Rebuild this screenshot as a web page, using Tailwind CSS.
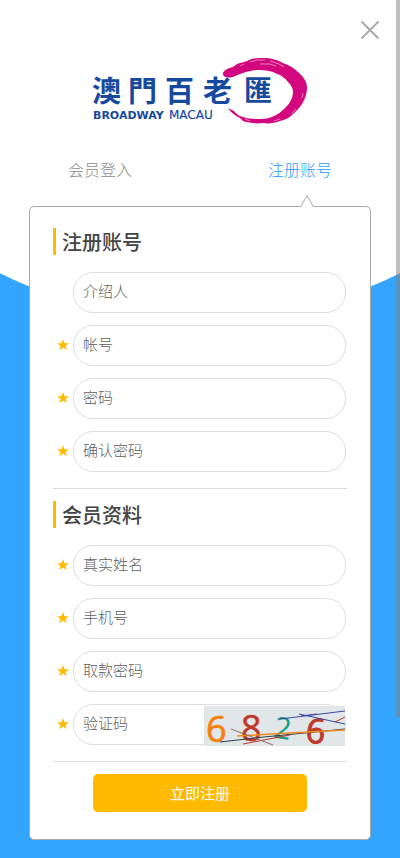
<!DOCTYPE html>
<html lang="zh-CN">
<head>
<meta charset="utf-8">
<meta name="viewport" content="width=device-width, initial-scale=1">
<title>注册账号</title>
<script src="https://cdn.jsdelivr.net/npm/@tailwindcss/browser@4"></script>
</head>
<body class="bg-[#33a5ff] font-['Noto_Sans_CJK_SC',sans-serif] text-[#444]">
<svg class="hidden"><symbol id="star" viewBox="0 0 24 24"><path fill="#ffba00" d="M12 0l3 8.500h9l-7.200 5.300 2.700 8.700L12 17.200l-7.500 5.300 2.700-8.700L0 8.500h9z"/></symbol></svg>
<div class="relative isolate min-h-screen overflow-hidden pb-[18px]">
  <div class="absolute left-1/2 bottom-[538px] -z-10 size-[902px] -translate-x-1/2 rounded-full bg-white"></div>
  <div class="absolute right-0 top-0 z-10 h-[717px] w-1 bg-[#808080]/50"></div>

  <header class="flex flex-col">
    <button type="button" aria-label="关闭" class="mr-5 mt-5 size-5 self-end">
      <svg viewBox="0 0 20 20" class="size-5" fill="none" stroke="#aaa" stroke-width="2"><path d="M1.500 1.500l17 17M18.500 1.500l-17 17"/></svg>
    </button>
    <svg viewBox="0 0 220 70" class="mt-[15px] h-[70px] w-[220px] self-center overflow-visible" role="img" aria-label="澳門百老匯 Broadway Macau">
      <path fill="#d3087f" d="M133 20C132 16 138 13 143 12C147 8 151 8 157 6C162 3 168 3 173 3C181 3 188 5 193 8C199 10 204 13 208 17C214 22 217 27 217 33C217 39 215 44 212 49C209 54 206 56 203 59C199 63 195 65 190 66C185 68 179 69 173 68C166 69 159 68 153 66C150 62 147 62 145 60C142 58 140 56 138 53L144 56C147 60 150 61 153 62C159 64 165 64 171 64C176 64 180 63 184 61C188 59 191 57 194 54C199 50 203 43 203 37C203 33 201 30 198 27C195 23 191 20 187 19C182 16 176 15 170 15C164 15 158 16 153 18C149 19 146 21 143 22C139 23 135 23 133 20Z"/>
      <path fill="none" stroke="#fff" stroke-width=".6" stroke-opacity=".8" d="M150 11l4-2M160 7l7-2 8 0M170 9l10 0 6 2M180 6l9 3 5 3M213 38l-1 5M206 54l-4 4M190 64l-6 2M160 66l-5-2"/>
      <g fill="#164a9f" font-family="'Noto Sans CJK TC', sans-serif" font-weight="700" font-size="29">
        <text x="2" y="47">澳</text><text x="38" y="47">門</text><text x="75" y="47">百</text><text x="113" y="47">老</text><text x="154" y="46" font-size="28">匯</text>
      </g>
      <g fill="#164a9f" font-family="'DejaVu Sans', sans-serif">
        <text x="3" y="64" font-size="11" font-weight="700">BROADWAY</text><text x="79" y="64" font-size="12" stroke="#164a9f" stroke-width=".2">MACAU</text>
      </g>
    </svg>
    <nav class="mt-8 flex text-base leading-6">
      <a href="#login" class="flex-1 text-center font-light text-[#8c8c8c]">会员登入</a>
      <a href="#register" class="flex-1 text-center font-light text-[#1f9bff]">注册账号</a>
    </nav>
  </header>

  <main class="relative mx-[29px] mt-[25px] rounded-[5px] border border-[#aaa] bg-white px-[23px] pb-[27px] pt-[21px]">
    <svg class="absolute right-[56px] -top-3 h-3 w-[14px]" viewBox="0 0 14 12"><path d="M.5 12L7 .5 13.500 12" fill="#fff" stroke="#aaa"/></svg>
    <form>
      <h2 class="border-l-3 border-[#ffba00] pl-[6px] text-xl leading-[27px] font-medium">注册账号</h2>
      <div class="mt-[17px] mr-px flex flex-col gap-3">
        <label class="flex items-center"><span class="w-5 pb-[2px] pl-1"></span><input aria-label="介绍人" placeholder="介绍人" class="h-[41px] min-w-0 flex-1 rounded-[20px] border border-[#ddd] bg-white px-[9px] pb-1 text-[15px] font-light placeholder:text-[#606060]"></label>
        <label class="flex items-center"><span class="w-5 pb-[2px] pl-1"><svg class="size-3"><use href="#star"/></svg></span><input aria-label="帐号" placeholder="帐号" required class="h-[41px] min-w-0 flex-1 rounded-[20px] border border-[#ddd] bg-white px-[9px] pb-1 text-[15px] font-light placeholder:text-[#606060]"></label>
        <label class="flex items-center"><span class="w-5 pb-[2px] pl-1"><svg class="size-3"><use href="#star"/></svg></span><input type="password" aria-label="密码" placeholder="密码" required class="h-[41px] min-w-0 flex-1 rounded-[20px] border border-[#ddd] bg-white px-[9px] pb-1 text-[15px] font-light placeholder:text-[#606060]"></label>
        <label class="flex items-center"><span class="w-5 pb-[2px] pl-1"><svg class="size-3"><use href="#star"/></svg></span><input type="password" aria-label="确认密码" placeholder="确认密码" required class="h-[41px] min-w-0 flex-1 rounded-[20px] border border-[#ddd] bg-white px-[9px] pb-1 text-[15px] font-light placeholder:text-[#606060]"></label>
      </div>
      <hr class="mt-4 mb-3 border-[#ddd]">
      <h2 class="border-l-3 border-[#ffba00] pl-[6px] text-xl leading-[27px] font-medium">会员资料</h2>
      <div class="mt-[17px] mr-px flex flex-col gap-3">
        <label class="flex items-center"><span class="w-5 pb-[2px] pl-1"><svg class="size-3"><use href="#star"/></svg></span><input aria-label="真实姓名" placeholder="真实姓名" required class="h-[41px] min-w-0 flex-1 rounded-[20px] border border-[#ddd] bg-white px-[9px] pb-1 text-[15px] font-light placeholder:text-[#606060]"></label>
        <label class="flex items-center"><span class="w-5 pb-[2px] pl-1"><svg class="size-3"><use href="#star"/></svg></span><input type="tel" aria-label="手机号" placeholder="手机号" required class="h-[41px] min-w-0 flex-1 rounded-[20px] border border-[#ddd] bg-white px-[9px] pb-1 text-[15px] font-light placeholder:text-[#606060]"></label>
        <label class="flex items-center"><span class="w-5 pb-[2px] pl-1"><svg class="size-3"><use href="#star"/></svg></span><input type="password" aria-label="取款密码" placeholder="取款密码" required class="h-[41px] min-w-0 flex-1 rounded-[20px] border border-[#ddd] bg-white px-[9px] pb-1 text-[15px] font-light placeholder:text-[#606060]"></label>
        <div class="relative">
          <label class="flex items-center"><span class="w-5 pb-[2px] pl-1"><svg class="size-3"><use href="#star"/></svg></span><input aria-label="验证码" placeholder="验证码" required class="h-[41px] min-w-0 flex-1 rounded-[20px] border border-[#ddd] bg-white px-[9px] pb-1 text-[15px] font-light placeholder:text-[#606060]"></label>
          <svg class="absolute right-px top-[2px] h-10 w-[141px] overflow-visible bg-[#e1e6e8]" viewBox="0 0 141 40" role="img" aria-label="验证码图片">
            <g font-family="'Open Sans', sans-serif" font-weight="400" stroke-width=".6">
              <text x="2" y="36" font-size="36" fill="#f77f0b" stroke="#f77f0b">6</text>
              <text x="37" y="35" font-size="36" fill="#c0392b" stroke="#c0392b">8</text>
              <text x="70" y="33" font-size="30" fill="#16a085" stroke="none" transform="rotate(8 80 24)">2</text>
              <text x="102" y="37" font-size="34" fill="#c0392b" stroke="#c0392b" stroke-width="1" transform="rotate(5 110 26)">6</text>
            </g>
            <g fill="none">
              <path stroke="#2c3e50" d="M16 36L60 31 141 23"/>
              <path stroke="#f08a1d" stroke-width="1.500" d="M33 30L141 24"/>
              <path stroke="#3c48a5" d="M76 13L141 5M95 8L141 18M97 10l16-2"/>
              <path stroke="#c0392b" d="M39 38L86 29M131 16l10-5"/>
              <path stroke="#8d6e63" d="M27 23L69 39"/>
            </g>
          </svg>
        </div>
      </div>
      <hr class="mt-4 mb-3 border-[#ddd]">
      <button type="submit" class="mx-10 block h-[38px] w-[calc(100%-80px)] rounded-[5px] bg-[#ffba00] text-[15px] font-normal text-white">立即注册</button>
    </form>
  </main>
</div>
</body>
</html>
